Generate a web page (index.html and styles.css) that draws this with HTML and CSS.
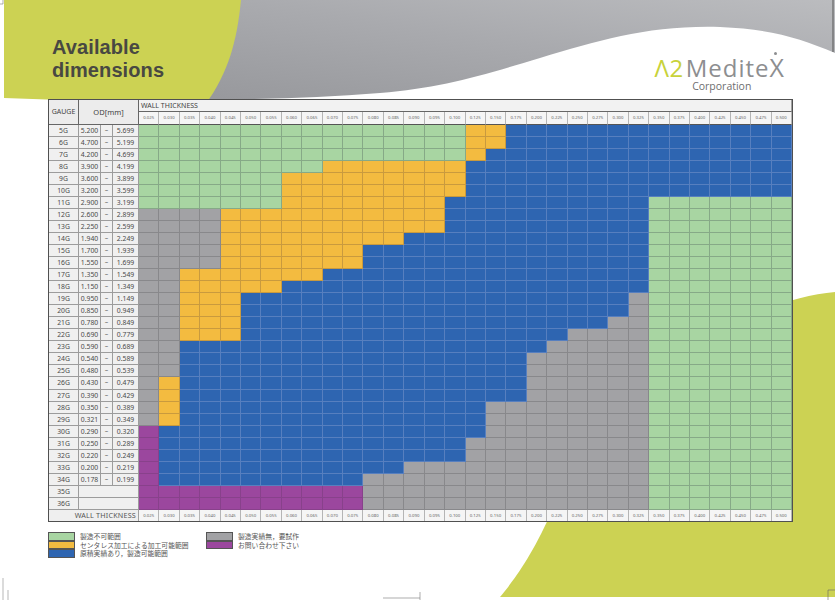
FILE: index.html
```html
<!DOCTYPE html>
<html lang="ja">
<head>
<meta charset="utf-8">
<title>Available dimensions</title>
<link rel="stylesheet" href="styles.css">
</head>
<body>
<svg class="bg" width="835" height="600" viewBox="0 0 835 600" aria-hidden="true">
  <defs>
    <linearGradient id="gr" x1="0" y1="1" x2="1" y2="0">
      <stop offset="0" stop-color="#96979b"/>
      <stop offset="0.55" stop-color="#a9aaae"/>
      <stop offset="1" stop-color="#bbbcbf"/>
    </linearGradient>
  </defs>
  <path d="M150,0 H835 V53 C800,38 770,29 720,27 C650,25 600,40 540,58 C480,76 440,88 380,93 C320,98 260,99 200,100 L150,100 Z" fill="url(#gr)"/>
  <path d="M4,0 H241 C237,40 229,72 205,105 L4,98 Z" fill="#ccd253"/>
  <path d="M835,292 C740,300 600,390 550,515 C530,560 510,585 500,597 L835,597 Z" fill="#ccd253"/>
  <path d="M833,0 V52" stroke="#555" stroke-width="1"/>
  <path d="M0,4 H3 M3,0 V4" stroke="#777" stroke-width=".6" fill="none"/>
  <path d="M420,592 V600 M383,598 H420" stroke="#777" stroke-width=".6" fill="none"/>
  <path d="M3,578 V600 M8,590 V600" stroke="#888" stroke-width=".6" fill="none"/>
  <path d="M828,600 V590 H835" stroke="#666" stroke-width=".6" fill="none"/>
</svg>
<div class="page">
  <header class="top">
    <h1 class="title"><span class="tl-line">Available</span><span class="tl-line">dimensions</span></h1>
    <div class="logo">
      <div class="logo-main"><span class="lg-a">Λ2</span><span class="lg-b">Medite</span><span class="lg-x">X</span></div>
      <div class="logo-sub">Corporation</div>
    </div>
  </header>
  <div class="tbl" id="tbl"></div>
  <div class="legend">
    <div class="lg-item"><span class="sw g"></span><span>製造不可範囲</span></div>
    <div class="lg-item"><span class="sw o"></span><span>センタレス加工による加工可能範囲</span></div>
    <div class="lg-item"><span class="sw b"></span><span>原積実績あり，製造可能範囲</span></div>
    <div class="lg-item"><span class="sw x"></span><span>製造実績無，要試作</span></div>
    <div class="lg-item"><span class="sw p"></span><span>お問い合わせ下さい</span></div>
  </div>
</div>
<script src="app.js"></script>
</body>
</html>
```

FILE: styles.css
```css
html, body {
  margin: 0;
  padding: 0;
}
body {
  width: 835px;
  height: 600px;
  overflow: hidden;
  position: relative;
  background: #ffffff;
  font-family: "Noto Sans", "Noto Sans CJK JP", sans-serif;
  color: #444;
}
.bg {
  position: absolute;
  left: 0;
  top: 0;
  z-index: 0;
}
.page {
  position: relative;
  z-index: 1;
}
.top {
  display: flex;
  justify-content: space-between;
  height: 99px;
  padding: 0 50px 0 52px;
  box-sizing: border-box;
}
.title {
  margin: 36px 0 0 0;
  font-family: "Liberation Sans", Arial, sans-serif;
  font-weight: 700;
  font-size: 20px;
  line-height: 23px;
  color: #484842;
  letter-spacing: 0.1px;
}
.tl-line {
  display: block;
}
.logo {
  margin-top: 55px;
  display: flex;
  flex-direction: column;
  align-items: center;
}
.logo-main {
  font-family: "Open Sans", "Noto Sans", sans-serif;
  font-weight: 400;
  font-size: 24px;
  line-height: 24px;
  letter-spacing: 1px;
  color: #8d8e90;
  white-space: nowrap;
}
.lg-a {
  color: #c8d23a;
  letter-spacing: 0.5px;
  margin-right: 2px;
}
.lg-x {
  position: relative;
  font-size: 25px;
}
.lg-x::before {
  content: "";
  position: absolute;
  left: 4px;
  top: 2px;
  width: 3px;
  height: 3px;
  border-radius: 50%;
  background: #8d8e90;
}
.logo-sub {
  font-family: "Open Sans", "Noto Sans", sans-serif;
  font-size: 10.5px;
  line-height: 11px;
  color: #6e6e70;
  margin-top: 1px;
  margin-left: 4px;
}

/* table */
.tbl {
  margin-left: 48px;
  width: 745px;
  box-sizing: border-box;
  border: 1px solid #505050;
  display: grid;
  grid-template-columns: 30px 22px 12px 26px repeat(32, 1fr);
  grid-template-rows: 12px 12.5px repeat(32, 12.06px) 11px;
  background: #f1f1f1;
}
.tbl > div {
  box-sizing: border-box;
  border-right: 1px solid #a0a0a0;
  border-bottom: 1px solid #a0a0a0;
  overflow: hidden;
  white-space: nowrap;
}
.gauge-h {
  grid-row: 1 / 3;
  grid-column: 1;
  background: #ececec;
  font-size: 7px;
  display: flex;
  align-items: center;
  justify-content: center;
  border-right-color: #666 !important;
  border-bottom-color: #666 !important;
}
.od-h {
  grid-row: 1 / 3;
  grid-column: 2 / 5;
  background: #ececec;
  font-size: 7.5px;
  display: flex;
  align-items: center;
  justify-content: center;
  border-right-color: #666 !important;
  border-bottom-color: #666 !important;
}
.wt-h {
  grid-column: 5 / -1;
  background: #f2f2f2;
  font-size: 7px;
  line-height: 11px;
  padding-left: 2px;
  border-bottom-color: #666 !important;
}
.th {
  background: #f5f5f5;
  font-size: 4.3px;
  color: #666;
  text-align: center;
  line-height: 11.5px;
  border-bottom-color: #555 !important;
  border-right-color: #b5b5b5 !important;
}
.ft {
  line-height: 10px;
  border-bottom: none !important;
}
.ft-l {
  grid-column: span 4;
  background: #efefef;
  font-size: 7.2px;
  line-height: 10px;
  text-align: right;
  padding-right: 2px;
  color: #555;
  letter-spacing: 0.2px;
  border-bottom: none !important;
}
.lc {
  background: #f0f0f0;
  font-size: 6.8px;
  line-height: 11px;
  text-align: center;
  color: #4a4a4a;
  border-color: #9c9c9c !important;
}
.lc.tl {
  font-size: 6px;
}
.lc.span3 {
  grid-column: span 3;
}
.c.g { background: #a8d5a2; border-color: #86a987 !important; }
.c.o { background: #f3bb40; border-color: #c99a3e !important; }
.c.b { background: #2e65b1; border-color: #577fbf !important; }
.c.x { background: #a2a2a5; border-color: #88888b !important; }
.c.p { background: #9b479e; border-color: #88418b !important; }

/* legend */
.legend {
  margin: 10px 0 0 48px;
  display: grid;
  grid-template-columns: 158px auto;
  grid-template-rows: repeat(3, 8.5px);
  grid-auto-flow: column;
  width: 400px;
}
.lg-item {
  display: flex;
  align-items: center;
  gap: 5px;
  font-family: "Noto Sans CJK JP", sans-serif;
  font-size: 6.8px;
  line-height: 8.5px;
  color: #555;
}
.sw {
  display: block;
  width: 27px;
  height: 8.5px;
  box-sizing: border-box;
  border: 1px solid #555;
}
.sw.g { background: #a8d5a2; }
.sw.o { background: #f3bb40; }
.sw.b { background: #2e65b1; }
.sw.x { background: #a2a2a5; }
.sw.p { background: #9b479e; }
```

FILE: app.js
```javascript
(function () {
  var TH = ['0.025','0.030','0.035','0.040','0.045','0.050','0.055','0.060','0.065','0.070','0.075','0.080','0.085','0.090','0.095','0.100','0.125','0.150','0.175','0.200','0.225','0.250','0.275','0.300','0.325','0.350','0.375','0.400','0.425','0.450','0.475','0.500'];
  var ROWS = [
    ['5G','5.200','5.699','g16o2b14'],
    ['6G','4.700','5.199','g16o2b14'],
    ['7G','4.200','4.699','g16o1b15'],
    ['8G','3.900','4.199','g9o7b16'],
    ['9G','3.600','3.899','g7o9b16'],
    ['10G','3.200','3.599','g7o9b16'],
    ['11G','2.900','3.199','g7o8b10g7'],
    ['12G','2.600','2.899','x4o11b10g7'],
    ['13G','2.250','2.599','x4o11b10g7'],
    ['14G','1.940','2.249','x4o9b12g7'],
    ['15G','1.700','1.939','x4o7b14g7'],
    ['16G','1.550','1.699','x4o7b14g7'],
    ['17G','1.350','1.549','x2o7b16g7'],
    ['18G','1.150','1.349','x2o5b18g7'],
    ['19G','0.950','1.149','x2o3b19x1g7'],
    ['20G','0.850','0.949','x2o3b19x1g7'],
    ['21G','0.780','0.849','x2o3b18x2g7'],
    ['22G','0.690','0.779','x2o3b16x4g7'],
    ['23G','0.590','0.689','x2b18x5g7'],
    ['24G','0.540','0.589','x2b17x6g7'],
    ['25G','0.480','0.539','x2b17x6g7'],
    ['26G','0.430','0.479','x1o1b17x6g7'],
    ['27G','0.390','0.429','x1o1b17x6g7'],
    ['28G','0.350','0.389','x1o1b15x8g7'],
    ['29G','0.321','0.349','x1o1b15x8g7'],
    ['30G','0.290','0.320','p1b16x8g7'],
    ['31G','0.250','0.289','p1b15x9g7'],
    ['32G','0.220','0.249','p1b15x9g7'],
    ['33G','0.200','0.219','p1b12x12g7'],
    ['34G','0.178','0.199','p1b10x14g7'],
    ['35G','','','p11x14g7'],
    ['36G','','','p11x14g7']
  ];
  var tbl = document.getElementById('tbl');
  function cell(cls, text) {
    var d = document.createElement('div');
    d.className = cls;
    if (text) d.textContent = text;
    tbl.appendChild(d);
    return d;
  }
  cell('gauge-h', 'GAUGE');
  cell('od-h', 'OD[mm]');
  cell('wt-h', 'WALL THICKNESS');
  TH.forEach(function (t) { cell('th', t); });
  ROWS.forEach(function (r) {
    cell('lc', r[0]);
    if (r[1]) {
      cell('lc', r[1]);
      cell('lc tl', '~');
      cell('lc', r[2]);
    } else {
      cell('lc span3', '');
    }
    var re = /([a-z])(\d+)/g, m;
    while ((m = re.exec(r[3])) !== null) {
      for (var i = 0; i < parseInt(m[2], 10); i++) cell('c ' + m[1], '');
    }
  });
  cell('ft-l', 'WALL THICKNESS');
  TH.forEach(function (t) { cell('th ft', t); });
})();
```
